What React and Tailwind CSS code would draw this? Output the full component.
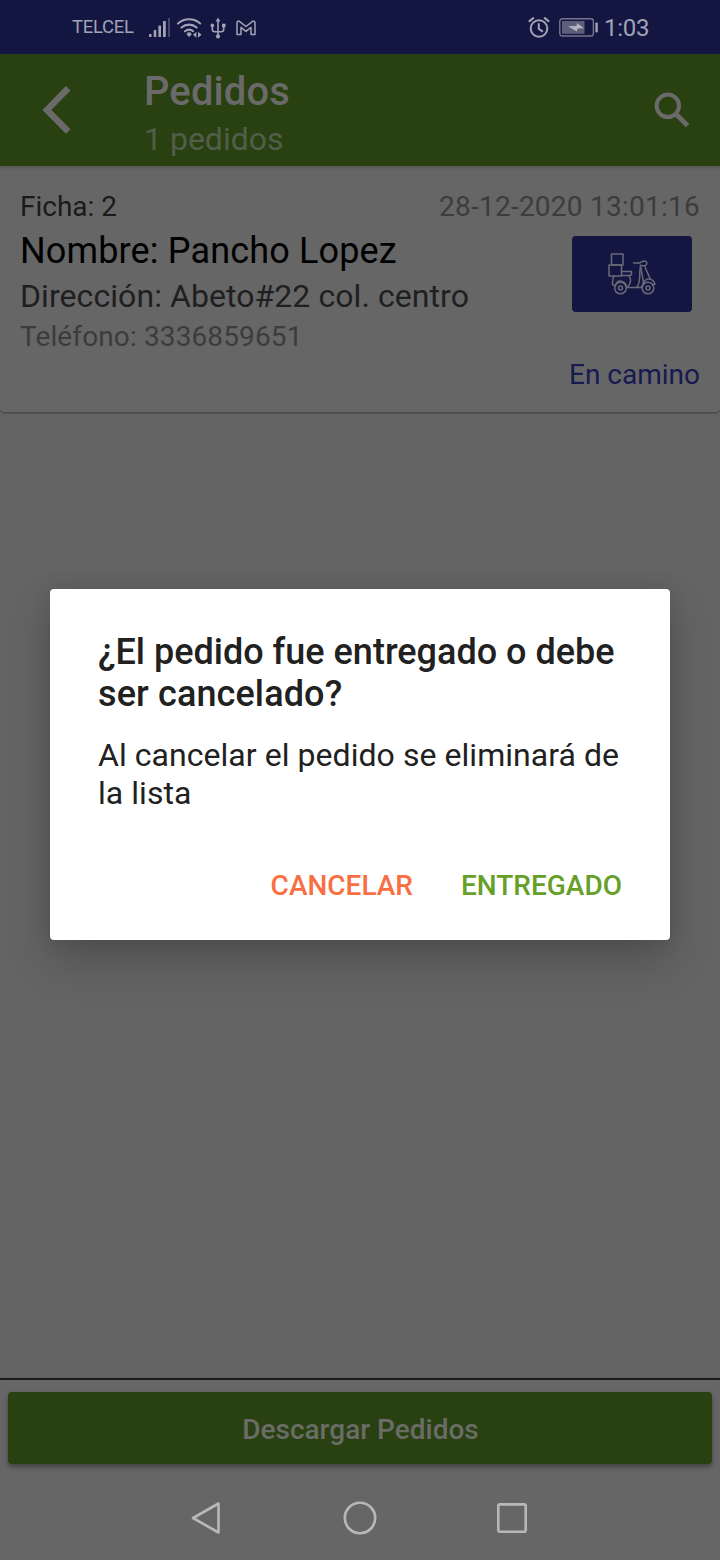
function StatusBar() {
  return (
    <div className="flex h-[54px] items-center bg-[#141642] pl-[72px] pr-[71px] pt-[2px] text-[#a1a2b3]">
      <span className="w-[62px] whitespace-nowrap text-[18.5px] tracking-[-0.3px]">TELCEL</span>
      <svg className="ml-[15px] h-[20px] w-[22px]" viewBox="0 0 22 20" fill="currentColor">
        <rect x="0" y="16" width="2.6" height="3" rx="0.6" />
        <rect x="4.7" y="12" width="2.6" height="7" rx="0.6" />
        <rect x="9.4" y="7.5" width="2.6" height="11.5" rx="0.6" />
        <rect x="14" y="3" width="2.8" height="16" rx="0.6" />
        <rect x="19" y="0" width="2" height="19" fillOpacity="0.35" />
      </svg>
      <svg className="ml-[5px] h-[22px] w-[27px]" viewBox="0 0 27 22" fill="none" stroke="currentColor" strokeWidth="2.1" strokeLinecap="round">
        <path d="M2 6.5C8.4 .9 17.8 .9 24.2 6.5" />
        <path d="M5.5 10.5C10 6.6 16.2 6.6 20.7 10.5" />
        <path d="M9 14.3C11.5 12.3 14.7 12.3 17 14.1" />
        <path d="M10.6 17.5a2.5 2.3 0 0 1 5 0l-2.5 2.4z" fill="currentColor" stroke="none" />
        <path d="M20.4 14.8v6l-3.4-3z M22 14.8v6l3.6-3z" fill="currentColor" stroke="none" />
      </svg>
      <svg className="ml-[7px] h-[22px] w-[16px]" viewBox="0 0 16 22" fill="none" stroke="currentColor" strokeWidth="1.6">
        <path d="M8 3v16" />
        <path d="M2.3 9v3.2c0 1.6 1 2.5 2.5 2.5h6.4c1.5 0 2.5-.9 2.5-2.5V9" />
        <path d="M8 .6 10.4 4.6H5.6z" fill="currentColor" stroke="none" />
        <circle cx="8" cy="19.4" r="2.1" fill="currentColor" stroke="none" />
        <circle cx="2.3" cy="8.4" r="1.8" fill="currentColor" stroke="none" />
        <rect x="12" y="6.7" width="3.5" height="3.5" fill="currentColor" stroke="none" />
      </svg>
      <svg className="ml-[10px] h-[16px] w-[20px]" viewBox="0 0 20 16" fill="none" stroke="currentColor" strokeWidth="1.5" strokeLinejoin="round">
        <path d="M1 14.5V2.6C1 1 2.9.8 3.8 1.6L10 6.5 16.2 1.6C17.1.8 19 1 19 2.6V14.5H15V7.4L10 11.4 5 7.4V14.5z" />
      </svg>
      <svg className="ml-auto h-[22px] w-[22px]" viewBox="0 0 22 22" fill="none" stroke="currentColor" strokeWidth="2" strokeLinecap="round">
        <circle cx="11" cy="11.5" r="8.3" />
        <path d="M10.8 6.9v5l3.4 2.2" />
        <path d="M1.5 4.1 5.2 1.1M20.5 4.1 16.8 1.1" />
      </svg>
      <svg className="ml-[9px] h-[20px] w-[40px]" viewBox="0 0 40 20" fill="none">
        <rect x=".8" y=".8" width="33.6" height="17.2" rx="2.6" stroke="#74768f" strokeWidth="1.4" />
        <rect x="3" y="3" width="22.5" height="12.8" fill="#5c5e7a" />
        <path d="M9 8.3 17.5 8.1 18 5 25 10.3 18.5 10.4 17.8 13.5z" fill="#b4b5c2" />
        <rect x="36.4" y="4.5" width="2.4" height="10" rx=".8" fill="#a1a2b3" />
      </svg>
      <span className="ml-[5px] w-[45px] whitespace-nowrap text-[24px] leading-none tracking-[-0.3px]">1:03</span>
    </div>
  );
}

function Header() {
  return (
    <header className="flex h-[112px] bg-[#294010]">
      <svg className="ml-[40px] mt-[30px] h-[52px] w-[34px]" viewBox="0 0 34 52" fill="none" stroke="#6a6a6a" strokeWidth="6.4">
        <path d="M28.2 4.2 6.9 25.9 28.2 47.6" />
      </svg>
      <div className="ml-[70px] mt-[14px] flex flex-col">
        <h1 className="text-[40px] font-medium leading-[47px] tracking-[0.1px] text-[#6a6a6a]">Pedidos</h1>
        <p className="mt-[5px] text-[32px] leading-[38px] text-[#535e4a]">1 pedidos</p>
      </div>
      <svg className="ml-auto mr-[29px] mt-[38px] h-[37px] w-[37px]" viewBox="0 0 37 37" fill="none" stroke="#6a6a6a" strokeWidth="4">
        <circle cx="13.8" cy="13.8" r="11.2" />
        <path d="M22.2 22.2 33.6 33.6" strokeWidth="4.8" />
      </svg>
    </header>
  );
}

function ScooterIcon() {
  return (
    <svg className="h-[44px] w-[48px]" viewBox="0 0 48 44" fill="none" stroke="#696a78" strokeWidth="1.5" strokeLinejoin="round" strokeLinecap="round">
      <rect x="3.5" y="2" width="11.5" height="11" />
      <rect x="1" y="13" width="12.5" height="11" />
      <path d="M13.5 19.5H23.5V22C23.5 23 22.5 23.5 21.5 23.5H13.5" />
      <path d="M6 24C4 27.5 4.5 30 4.5 32.5L7.5 34M21 24C23.5 27 23 31 19.5 35.5H28.5C31 33 32 29 31.8 20L32.5 13.5" />
      <path d="M25.5 11H31.5L35 9.2C38 8.6 39.5 10.5 38.5 12.5C37.5 14.5 35 14 32.5 13.2M37 14C37.5 19 41 22 42 27M33 16C34 24 35.5 27 35.5 32L33 35.5H28.5" />
      <path d="M35 31.5C38 25.5 44.5 25.5 47 32L44.5 33M8 32C10 27.5 17 28 18.5 34.5" />
      <circle cx="12.5" cy="36" r="5.8" />
      <circle cx="12.5" cy="36" r="2" />
      <circle cx="40" cy="36" r="5.8" />
      <circle cx="40" cy="36" r="2" />
    </svg>
  );
}

function OrderCard() {
  return (
    <section className="flex h-[248px] flex-col whitespace-nowrap rounded-b-[5px] border-b-2 border-[#4f4f4f] bg-[#666666] px-[20px] pt-[24px] shadow-[inset_0_3px_3px_-1px_rgba(0,0,0,0.13)]">
      <div className="flex justify-between text-[28px] leading-[33px]">
        <p className="text-[#1a1a1a]">Ficha: 2</p>
        <p className="tracking-[0.25px] text-[#3c3c3c]">28-12-2020 13:01:16</p>
      </div>
      <div className="flex justify-between">
        <div className="flex flex-col">
          <p className="mt-[7px] text-[36px] leading-[42px] tracking-[0.15px] text-black">Nombre: Pancho Lopez</p>
          <p className="mt-[5px] text-[32px] leading-[38px] tracking-[0.07px] text-[#1f1f1f]">Dirección: Abeto#22 col. centro</p>
          <p className="mt-[5px] text-[28px] leading-[33px] tracking-[0.12px] text-[#3c3c3c]">Teléfono: 3336859651</p>
        </div>
        <div className="flex flex-col items-end">
          <div className="mr-[8px] mt-[13px] flex h-[76px] w-[120px] items-center justify-center rounded-[4px] bg-[#141642]">
            <ScooterIcon />
          </div>
          <p className="mt-[46px] text-[28px] leading-[33px] text-[#171a50]">En camino</p>
        </div>
      </div>
    </section>
  );
}

function ConfirmDialog() {
  return (
    <div role="dialog" className="absolute left-[50px] top-[589px] flex h-[351px] w-[620px] flex-col rounded-[4px] bg-white px-[48px] pt-[42px] shadow-[0_22px_44px_rgba(0,0,0,0.2),0_0_20px_rgba(0,0,0,0.1)]">
      <h2 className="whitespace-nowrap text-[36px] font-medium leading-[42px] text-[#212121]">
        ¿El pedido fue entregado o debe
        <br />
        <span className="tracking-[0.12px]">ser cancelado?</span>
      </h2>
      <p className="mt-[21px] whitespace-nowrap text-[32px] leading-[38px] tracking-[0.05px] text-[#212121]">
        Al cancelar el pedido se eliminará de
        <br />
        la lista
      </p>
      <div className="mt-[57px] flex justify-end gap-[48px] text-[28px] font-medium leading-[33px]">
        <button className="text-[#f76f43]">CANCELAR</button>
        <button className="text-[#66a028]">ENTREGADO</button>
      </div>
    </div>
  );
}

function NavBar() {
  return (
    <nav className="flex items-center justify-center gap-[118px] pt-[36px]">
      <svg className="h-[36px] w-[34px]" viewBox="0 0 34 36" fill="none" stroke="#b8b8b8" strokeWidth="2.6" strokeLinejoin="round">
        <path d="M28.5 3.5V32.5L3 18z" />
      </svg>
      <svg className="h-[36px] w-[36px]" viewBox="0 0 36 36" fill="none" stroke="#b8b8b8" strokeWidth="2.6">
        <circle cx="18" cy="18" r="15.2" />
      </svg>
      <svg className="h-[36px] w-[34px]" viewBox="0 0 34 36" fill="none" stroke="#b8b8b8" strokeWidth="2.6">
        <rect x="2.3" y="4.4" width="27.4" height="27.4" rx="1.5" />
      </svg>
    </nav>
  );
}

export default function App() {
  return (
    <div className="relative flex h-[1560px] w-[720px] flex-col overflow-hidden bg-[#646464] font-['Roboto',sans-serif]">
      <StatusBar />
      <Header />
      <OrderCard />
      <main className="grow" />
      <footer className="h-[182px] border-t-2 border-[#1a1a1a] bg-[#666666] px-[8px] pt-[12px]">
        <button className="flex h-[72px] w-full items-center justify-center rounded-[4px] bg-[#294010] pl-px pt-[2px] text-[28px] font-medium leading-[33px] text-[#696c67] shadow-[0_3px_5px_rgba(0,0,0,0.35)]">
          Descargar Pedidos
        </button>
        <NavBar />
      </footer>
      <ConfirmDialog />
    </div>
  );
}
